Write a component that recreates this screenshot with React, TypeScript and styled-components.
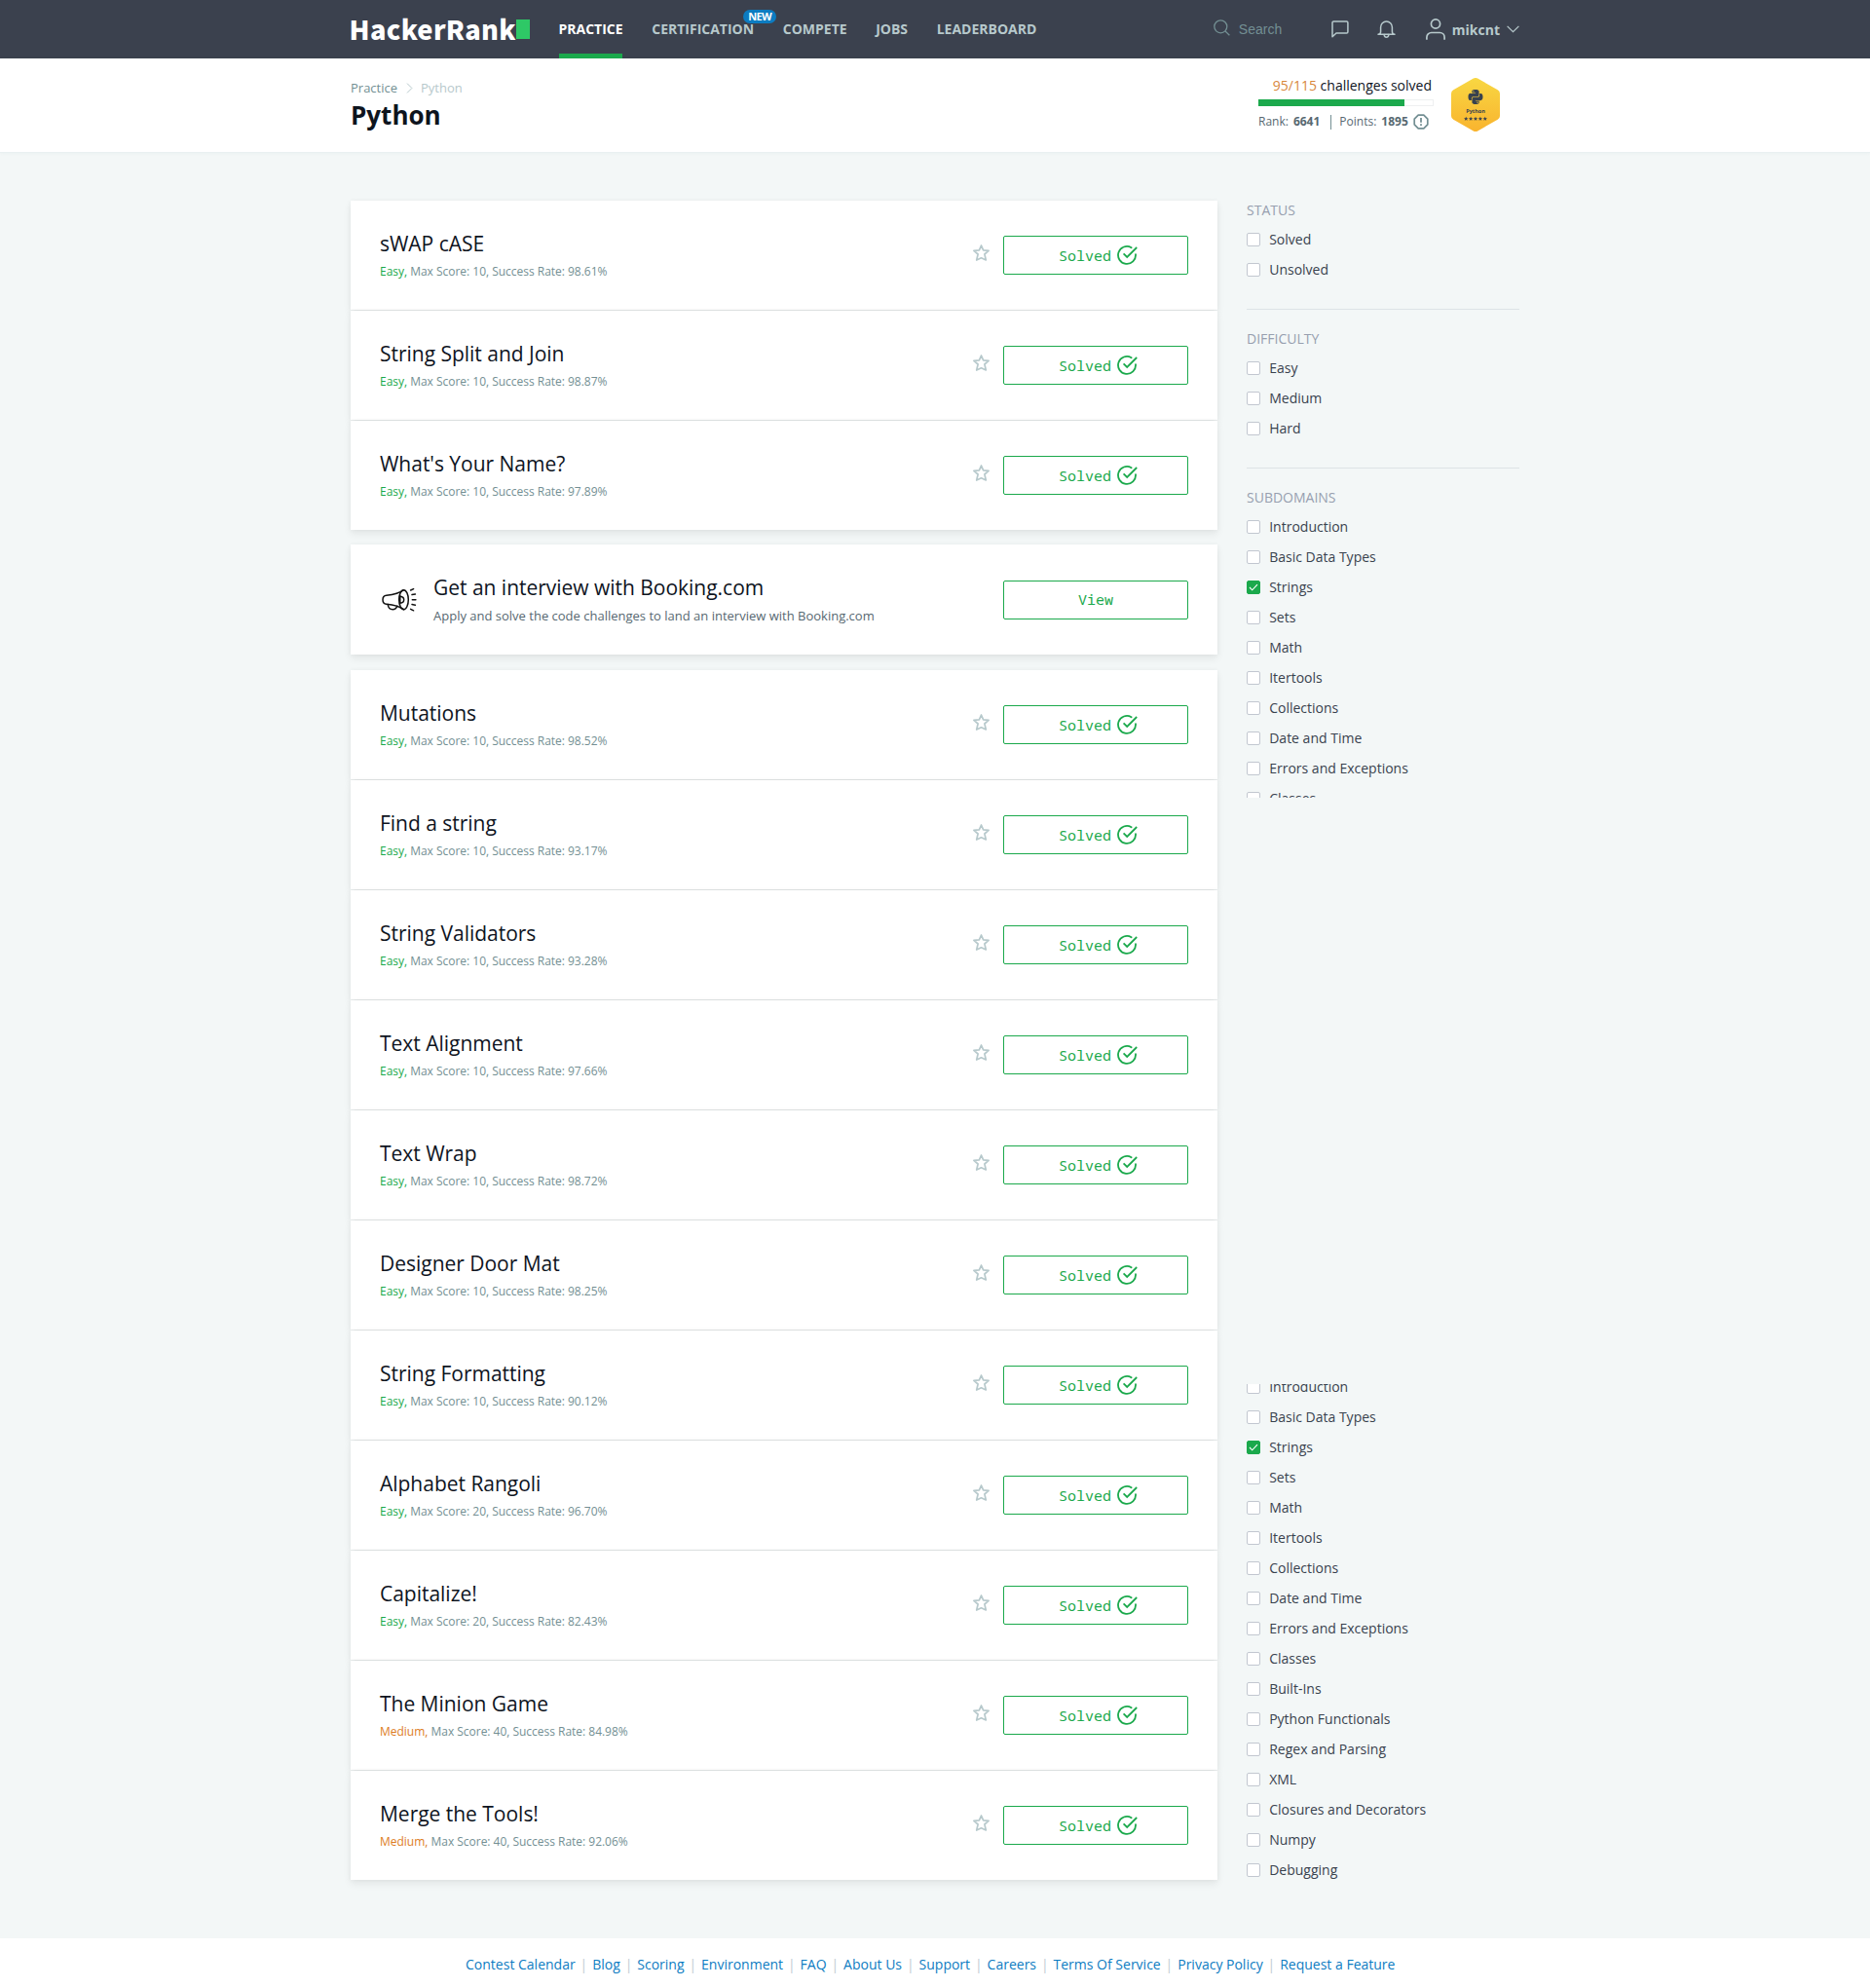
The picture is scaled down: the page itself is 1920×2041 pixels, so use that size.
import React from 'react';
import styled, { createGlobalStyle } from 'styled-components';

const GlobalStyle = createGlobalStyle`
  *, *::before, *::after { box-sizing: border-box; }
  body {
    margin: 0;
    background: #f3f7f7;
    color: #0e141e;
    font-family: "Open Sans", "Noto Sans", sans-serif;
    font-size: 14px;
    line-height: 20px;
  }
  a { color: inherit; text-decoration: none; }
  h1, h2, h3, p, ul { margin: 0; padding: 0; font-weight: 400; }
  ul { list-style: none; }
  svg { display: block; flex: none; }
`;

const Container = styled.div`
  width: 1200px;
  margin: 0 auto;
  display: flex;
`;

/* ---------- top navigation ---------- */

const TopBar = styled.header`
  height: 60px;
  background: #3b414e;
`;

const TopBarInner = styled(Container)`
  height: 60px;
  align-items: stretch;
`;

const Logo = styled.a`
  display: flex;
  align-items: center;
  width: 184px;
  color: #fff;
  font: 900 27.2px/28px "Noto Sans CJK SC", "Open Sans", sans-serif;
  letter-spacing: 0.35px;
`;

const LogoText = styled.span`
  margin: -3px 0 0 -1.5px;
`;

const LogoCursor = styled.span`
  width: 14px;
  height: 20px;
  margin-left: auto;
  background: #2ec866;
`;

const Nav = styled.nav`
  display: flex;
  gap: 29.6px;
  margin-left: 29.5px;
`;

const NavLink = styled.a<{ $active?: boolean }>`
  position: relative;
  display: flex;
  align-items: center;
  color: ${p => (p.$active ? '#fff' : '#b7c9cc')};
  font-weight: 700;
  &::after {
    content: '';
    display: ${p => (p.$active ? 'block' : 'none')};
    position: absolute;
    left: 0.5px;
    right: 0.6px;
    bottom: 0;
    height: 5px;
    background: #1ba94c;
  }
`;

const NewBadge = styled.span`
  position: absolute;
  top: 10px;
  right: -23px;
  width: 34px;
  height: 14px;
  border-radius: 7px;
  background: #0c7cc1;
  color: #fff;
  font-size: 11px;
  line-height: 14px;
  letter-spacing: -0.7px;
  text-align: center;
`;

const Tools = styled.div`
  display: flex;
  align-items: center;
  margin-left: auto;
`;

const SearchBox = styled.div`
  display: flex;
  align-items: center;
  gap: 9px;
  width: 121px;
  color: #738f93;
  font: 14px/20px "Liberation Sans", Arial, sans-serif;
`;

const SearchGlyph = styled.span`
  margin-top: -3px;
`;

const ToolIcon = styled.span<{ $gap: number }>`
  margin-right: ${p => p.$gap}px;
  color: #b7c9cc;
`;

const UserName = styled.span`
  margin-right: 7px;
  padding-top: 1px;
  color: #b7c9cc;
  font-weight: 700;
`;

/* ---------- page heading ---------- */

const PageHead = styled.section`
  height: 96px;
  background: #fff;
  box-shadow: 0 1px 0 #e9f0f1, 0 1px 4px rgba(20, 90, 90, 0.05);
`;

const PageHeadInner = styled(Container)`
  padding-top: 20px;
  justify-content: space-between;
`;

const Crumbs = styled.div`
  display: flex;
  align-items: center;
  gap: 8.5px;
  font-size: 13px;
  color: #738f93;
`;

const CrumbCurrent = styled.span`
  color: #b7c9cc;
`;

const PageTitle = styled.h1`
  font-size: 26px;
  line-height: 36px;
  font-weight: 700;
`;

const Progress = styled.div`
  display: flex;
  gap: 18px;
  margin-right: 20px;
`;

const ProgressText = styled.p`
  margin-top: -2px;
  padding-right: 2px;
  text-align: right;
`;

const Count = styled.span`
  color: #d8873c;
`;

const Track = styled.div`
  width: 180px;
  height: 7px;
  margin-top: 4px;
  border: 1px solid #eef0f1;
`;

const Fill = styled.div`
  width: 150px;
  height: 7px;
  margin: -1px;
  background: #1ba94c;
`;

const Stats = styled.div`
  display: flex;
  align-items: center;
  height: 20px;
  margin-top: 6px;
  color: #576871;
  font-size: 12px;
`;

const StatValue = styled.b`
  margin-left: 5px;
`;

const StatDivider = styled.i`
  width: 1px;
  height: 15px;
  margin: 0 8px 0 11px;
  background: #738f93;
`;

const StatIcon = styled.span`
  margin-left: 5px;
`;

/* ---------- challenge list ---------- */

const Main = styled(Container)`
  padding-top: 50px;
  justify-content: space-between;
  height: 1834px;
`;

const ListColumn = styled.div`
  width: 890px;
`;

const ChallengeGroup = styled.div<{ $after?: number }>`
  display: flex;
  flex-direction: column;
  gap: 1px;
  margin-bottom: ${p => p.$after || 0}px;
`;

const Card = styled.article<{ $h?: number; $after?: number }>`
  display: flex;
  height: ${p => p.$h || 112}px;
  margin-bottom: ${p => p.$after || 0}px;
  padding: 29px 30px 0;
  background: #fff;
  box-shadow: 0 4px 8px rgba(0, 0, 0, 0.07), 0 0 5px rgba(0, 0, 0, 0.04);
`;

const CardTitle = styled.h2`
  font-size: 21px;
  line-height: 30px;
  letter-spacing: -0.02px;
`;

const CardMeta = styled.p`
  margin-top: 4px;
  color: #738f93;
  font-size: 12px;
  letter-spacing: -0.018px;
`;

const Difficulty = styled.span<{ $medium: boolean }>`
  color: ${p => (p.$medium ? '#dd7d1e' : '#1ba94c')};
`;

const BannerText = styled.p`
  margin-top: 4px;
  color: #576871;
  font-size: 13px;
`;

const BannerIcon = styled.div`
  width: 55px;
  padding: 15px 0 0 2px;
`;

const Star = styled.span`
  margin: 16.4px 14px 0 auto;
`;

const ActionButton = styled.button<{ $alone?: boolean }>`
  display: flex;
  align-items: center;
  justify-content: center;
  gap: 6px;
  width: 190px;
  height: 40px;
  margin: ${p => (p.$alone ? '8px 0 0 auto' : '7px 0 0')};
  padding: ${p => (p.$alone ? '0 0 2px' : '0 0 0 5px')};
  border: 1px solid #1ba94c;
  border-radius: 2px;
  background: #fff;
  color: #1ba94c;
  font: 15px/20px "Noto Sans Mono", "DejaVu Sans Mono", monospace;
`;

/* ---------- filters ---------- */

const Sidebar = styled.aside`
  width: 280px;
`;

const FilterPanel = styled.div`
  height: 613px;
  overflow: hidden;
`;

const FilterTail = styled.div`
  margin-top: 602px;
  overflow: hidden;
`;

const FilterSection = styled.section`
  & + & {
    margin-top: 30px;
    padding-top: 20px;
    border-top: 1px solid #dde3e6;
  }
`;

const FilterHeading = styled.h3`
  margin-bottom: 10px;
  color: #979faf;
  font-size: 14px;
`;

const FilterList = styled.ul<{ $scrolled?: boolean }>`
  display: flex;
  flex-direction: column;
  gap: 11px;
  margin-top: ${p => (p.$scrolled ? '-7px' : '0')};
`;

const FilterItem = styled.li`
  display: flex;
  align-items: center;
  gap: 9.2px;
  color: #39424e;
`;

const CheckBox = styled.span<{ $on: boolean }>`
  display: flex;
  align-items: center;
  justify-content: center;
  width: 14px;
  height: 14px;
  border: 1px solid ${p => (p.$on ? '#1ba94c' : '#c2c7d0')};
  border-radius: 2px;
  background: ${p => (p.$on ? '#1ba94c' : '#fff')};
`;

/* ---------- footer ---------- */

const Footer = styled.footer`
  display: flex;
  justify-content: center;
  gap: 4.92px;
  height: 51px;
  padding: 17px 9.500px 0 0;
  background: #fff;
  color: #0e7cc2;
`;

const Pipe = styled.span`
  color: #c0ccd3;
`;

/* ---------- icons ---------- */

const SearchIcon = () => (
  <svg width="17" height="17" viewBox="0 0 17 17" fill="none" stroke="#738f93" strokeWidth="1.3">
    <circle cx="7.3" cy="7.3" r="6.5" />
    <path d="M12 12l4.4 4.2" />
  </svg>
);

const MessageIcon = () => (
  <svg width="18" height="18" viewBox="0 0 18 18" fill="none" stroke="currentColor" strokeWidth="1.5" strokeLinejoin="round">
    <path d="M2.400 1h13.200a1.300 1.300 0 0 1 1.300 1.300v9.400a1.300 1.300 0 0 1-1.300 1.300H5L1 16.700V2.300A1.300 1.300 0 0 1 2.400 1z" />
  </svg>
);

const BellIcon = () => (
  <svg width="19" height="18" viewBox="0 0 19 18" fill="none" stroke="currentColor" strokeWidth="1.5" strokeLinejoin="round" strokeLinecap="round">
    <path d="M1 14.200h17c-1.800 0-2.600-1.300-2.600-2.800V7a5.900 5.900 0 0 0-11.800 0v4.400c0 1.500-.8 2.800-2.600 2.800z" />
    <path d="M7.200 14.600a2.300 2.600 0 0 0 4.600 0" />
  </svg>
);

const UserIcon = () => (
  <svg width="20" height="22" viewBox="0 0 20 22" fill="none" stroke="currentColor" strokeWidth="1.700">
    <circle cx="10" cy="5.500" r="4.600" />
    <path d="M.9 21.800v-2.500a4.800 4.800 0 0 1 4.800-4.800h8.600a4.800 4.800 0 0 1 4.800 4.800v2.500" />
  </svg>
);

const ChevronDown = () => (
  <svg width="13" height="8" viewBox="0 0 13 8" fill="none" stroke="#b7c9cc" strokeWidth="1.200">
    <path d="M.6.8l5.900 5.900L12.400.8" />
  </svg>
);

const ChevronRight = () => (
  <svg width="7" height="11" viewBox="0 0 7 11" fill="none" stroke="#b7c9cc" strokeWidth="1">
    <path d="M1 .6l4.900 4.900L1 10.400" />
  </svg>
);

const InfoIcon = () => (
  <svg width="16" height="16" viewBox="0 0 16 16" fill="none" stroke="#738f93">
    <path strokeWidth="1.700" d="M5.200 1.200h5.600l4 4v5.600l-4 4H5.200l-4-4V5.200z" strokeLinejoin="round" />
    <path strokeWidth="1.800" d="M8 4v4.700M8 10.200v1.800" />
  </svg>
);

const StarIcon = () => (
  <svg width="17" height="17" viewBox="0 0 17 17" fill="none" stroke="#b7c9cc" strokeWidth="1.700" strokeLinejoin="round">
    <path d="M8.500 1l2.100 4.900 5.500.4-4.200 3.700 1.400 6-4.800-2.200L3.700 16l1.400-6L.9 6.300l5.500-.4z" />
  </svg>
);

const SolvedIcon = () => (
  <svg width="21" height="20" viewBox="0 0 21 20" fill="none" stroke="#1ba94c" strokeWidth="1.800">
    <path d="M14.600 2.200A9 9 0 1 0 19 9.200" strokeLinecap="round" />
    <path d="M6.600 8.400l3.600 3.600L20.200 2" />
  </svg>
);

const TickIcon = () => (
  <svg width="10" height="8" viewBox="0 0 10 8" fill="none" stroke="#fff" strokeWidth="1.100">
    <path d="M1 4l2.700 2.800L9 1.200" />
  </svg>
);

const MegaphoneIcon = () => (
  <svg width="36" height="26" viewBox="0 0 36 26" fill="none" stroke="#111" strokeWidth="1.500" strokeLinecap="round" strokeLinejoin="round">
    <ellipse cx="22.500" cy="12.700" rx="4.800" ry="10" />
    <path d="M22.500 2.700C18 6.200 13 7.500 4.800 8.200 2.200 8.400 1 10.200 1 12.700s1.200 4.300 3.800 4.500C13 17.900 18 19.200 22.500 22.700" />
    <path d="M6.200 17.500c.4 3.300 2.400 5.200 5 5.200 2.300 0 3.800-1.300 4.600-3.500" />
    <path d="M18.800 9.200c3 .4 3.900 1.900 3.900 3.500s-.9 3.200-3.900 3.600M18.800 8.400v8.400" />
    <path d="M29.600 3l3-1.400M31 7.600l3.400-.5M31.300 12.700h3.600M31 17.600l3.400.6M29.600 22.300l3 1.500" />
  </svg>
);

const PythonBadge = () => (
  <svg width="50" height="55" viewBox="0 0 50 55">
    <defs>
      <linearGradient id="gold" x1="0" y1="0" x2="0" y2="1">
        <stop offset="0" stopColor="#f8d742" />
        <stop offset="1" stopColor="#f9b42f" />
      </linearGradient>
      <path id="tiny-star" d="M0-2.200l.7 1.400 1.500.1-1.200 1 .4 1.500L0 1l-1.400.8.4-1.500-1.200-1 1.500-.1z" />
    </defs>
    <path fill="url(#gold)" d="M22.800.6a4.500 4.500 0 0 1 4.400 0l20.500 11.600a4.500 4.500 0 0 1 2.300 3.900v22.800a4.500 4.500 0 0 1-2.300 3.900L27.200 54.400a4.500 4.500 0 0 1-4.400 0L2.300 42.800A4.500 4.500 0 0 1 0 38.900V16.100a4.500 4.500 0 0 1 2.300-3.900z" />
    <g fill="#39424e" transform="translate(17.500 12) scale(.625)">
      <path d="M11.900 0C5.800 0 6.200 2.600 6.200 2.600v2.800H12v.8H3.900S0 5.800 0 11.900s3.400 5.800 3.400 5.800h2v-2.800s-.1-3.400 3.300-3.400h5.800s3.200.1 3.200-3.100V3.200S18.200 0 11.900 0zM8.700 1.800a1 1 0 1 1 0 2.100 1 1 0 0 1 0-2.100z" />
      <path d="M12.100 24c6.100 0 5.700-2.600 5.700-2.600v-2.800H12v-.8h8.100s3.900.4 3.900-5.700-3.400-5.800-3.400-5.800h-2v2.800s.1 3.400-3.300 3.400H9.500s-3.200-.1-3.200 3.100v5.200S5.800 24 12.100 24zm3.200-1.800a1 1 0 1 1 0-2.100 1 1 0 0 1 0 2.100z" />
    </g>
    <text x="25" y="36" textAnchor="middle" fontFamily="Open Sans, sans-serif" fontWeight="700" fontSize="5.500" fill="#39424e">Python</text>
    {[15.200, 20.100, 25, 29.900, 34.800].map(x => (
      <use key={x} href="#tiny-star" x={x} y="42" fill="#39424e" />
    ))}
  </svg>
);

/* ---------- data ---------- */

type Challenge = { name: string; score: number; rate: string; medium?: boolean };

const firstChallenges: Challenge[] = [
  { name: 'sWAP cASE', score: 10, rate: '98.61' },
  { name: 'String Split and Join', score: 10, rate: '98.87' },
  { name: "What's Your Name?", score: 10, rate: '97.89' },
];

const moreChallenges: Challenge[] = [
  { name: 'Mutations', score: 10, rate: '98.52' },
  { name: 'Find a string', score: 10, rate: '93.17' },
  { name: 'String Validators', score: 10, rate: '93.28' },
  { name: 'Text Alignment', score: 10, rate: '97.66' },
  { name: 'Text Wrap', score: 10, rate: '98.72' },
  { name: 'Designer Door Mat', score: 10, rate: '98.25' },
  { name: 'String Formatting', score: 10, rate: '90.12' },
  { name: 'Alphabet Rangoli', score: 20, rate: '96.70' },
  { name: 'Capitalize!', score: 20, rate: '82.43' },
  { name: 'The Minion Game', score: 40, rate: '84.98', medium: true },
  { name: 'Merge the Tools!', score: 40, rate: '92.06', medium: true },
];

const subdomains = [
  'Introduction', 'Basic Data Types', 'Strings', 'Sets', 'Math', 'Itertools', 'Collections',
  'Date and Time', 'Errors and Exceptions', 'Classes', 'Built-Ins', 'Python Functionals',
  'Regex and Parsing', 'XML', 'Closures and Decorators', 'Numpy', 'Debugging',
];

const footerLinks = [
  'Contest Calendar', 'Blog', 'Scoring', 'Environment', 'FAQ', 'About Us', 'Support',
  'Careers', 'Terms Of Service', 'Privacy Policy', 'Request a Feature',
];

/* ---------- composed parts ---------- */

const ChallengeCard = ({ name, score, rate, medium = false }: Challenge) => (
  <Card>
    <div>
      <CardTitle>{name}</CardTitle>
      <CardMeta>
        <Difficulty $medium={medium}>{medium ? 'Medium,' : 'Easy,'}</Difficulty>
        {` Max Score: ${score}, Success Rate: ${rate}%`}
      </CardMeta>
    </div>
    <Star><StarIcon /></Star>
    <ActionButton>Solved<SolvedIcon /></ActionButton>
  </Card>
);

const Filters = ({ items, scrolled }: { items: string[]; scrolled?: boolean }) => (
  <FilterList $scrolled={scrolled}>
    {items.map(item => (
      <FilterItem key={item}>
        <CheckBox $on={item === 'Strings'}>{item === 'Strings' && <TickIcon />}</CheckBox>
        {item}
      </FilterItem>
    ))}
  </FilterList>
);

export default function App() {
  return (
    <>
      <GlobalStyle />
      <TopBar>
        <TopBarInner>
          <Logo><LogoText>HackerRank</LogoText><LogoCursor /></Logo>
          <Nav>
            <NavLink $active>PRACTICE</NavLink>
            <NavLink>CERTIFICATION<NewBadge>NEW</NewBadge></NavLink>
            <NavLink>COMPETE</NavLink>
            <NavLink>JOBS</NavLink>
            <NavLink>LEADERBOARD</NavLink>
          </Nav>
          <Tools>
            <SearchBox><SearchGlyph><SearchIcon /></SearchGlyph>Search</SearchBox>
            <ToolIcon $gap={29}><MessageIcon /></ToolIcon>
            <ToolIcon $gap={31}><BellIcon /></ToolIcon>
            <ToolIcon $gap={7}><UserIcon /></ToolIcon>
            <UserName>mikcnt</UserName>
            <ChevronDown />
          </Tools>
        </TopBarInner>
      </TopBar>

      <PageHead>
        <PageHeadInner>
          <div>
            <Crumbs>Practice<ChevronRight /><CrumbCurrent>Python</CrumbCurrent></Crumbs>
            <PageTitle>Python</PageTitle>
          </div>
          <Progress>
            <div>
              <ProgressText><Count>95/115</Count> challenges solved</ProgressText>
              <Track><Fill /></Track>
              <Stats>
                Rank:<StatValue>6641</StatValue>
                <StatDivider />
                Points:<StatValue>1895</StatValue>
                <StatIcon><InfoIcon /></StatIcon>
              </Stats>
            </div>
            <PythonBadge />
          </Progress>
        </PageHeadInner>
      </PageHead>

      <Main>
        <ListColumn>
          <ChallengeGroup $after={15}>
            {firstChallenges.map(c => <ChallengeCard key={c.name} {...c} />)}
          </ChallengeGroup>
          <Card $h={113} $after={16}>
            <BannerIcon><MegaphoneIcon /></BannerIcon>
            <div>
              <CardTitle>Get an interview with Booking.com</CardTitle>
              <BannerText>Apply and solve the code challenges to land an interview with Booking.com</BannerText>
            </div>
            <ActionButton $alone>View</ActionButton>
          </Card>
          <ChallengeGroup>
            {moreChallenges.map(c => <ChallengeCard key={c.name} {...c} />)}
          </ChallengeGroup>
        </ListColumn>

        <Sidebar>
          <FilterPanel>
            <FilterSection>
              <FilterHeading>STATUS</FilterHeading>
              <Filters items={['Solved', 'Unsolved']} />
            </FilterSection>
            <FilterSection>
              <FilterHeading>DIFFICULTY</FilterHeading>
              <Filters items={['Easy', 'Medium', 'Hard']} />
            </FilterSection>
            <FilterSection>
              <FilterHeading>SUBDOMAINS</FilterHeading>
              <Filters items={subdomains.slice(0, 10)} />
            </FilterSection>
          </FilterPanel>
          <FilterTail>
            <Filters items={subdomains} scrolled />
          </FilterTail>
        </Sidebar>
      </Main>

      <Footer>
        {footerLinks.map((link, i) => (
          <React.Fragment key={link}>
            {i > 0 && <Pipe>|</Pipe>}
            <a>{link}</a>
          </React.Fragment>
        ))}
      </Footer>
    </>
  );
}
